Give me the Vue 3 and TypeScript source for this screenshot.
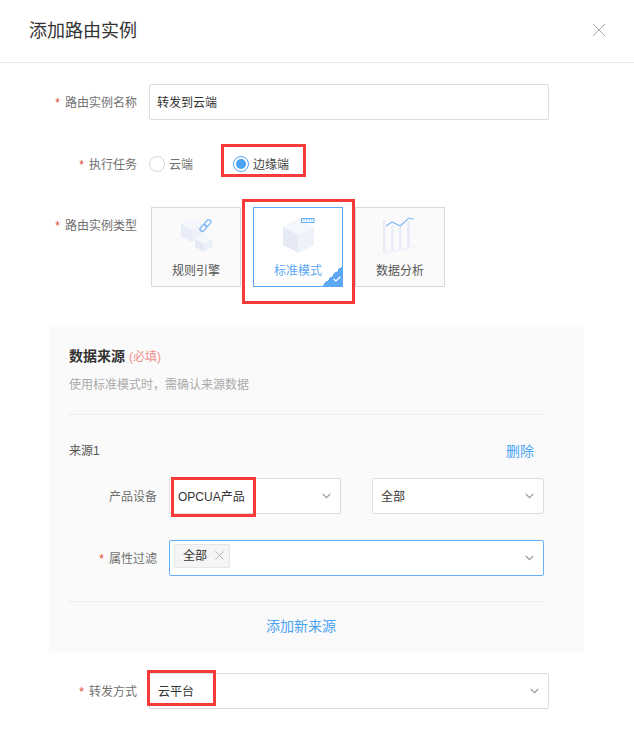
<script setup lang="ts">
type Card = { key: string; label: string; active?: boolean }
const cards: Card[] = [
  { key: 'rule', label: '规则引擎' },
  { key: 'std', label: '标准模式', active: true },
  { key: 'data', label: '数据分析' },
]
</script>

<template>
  <div class="dialog">
    <header class="head">
      <h1 class="title">添加路由实例</h1>
      <svg class="close" width="14" height="14" viewBox="0 0 14 14"><path d="M1 1l12 12M13 1L1 13" stroke="#a8a8a8" stroke-width="1" fill="none" /></svg>
    </header>

    <div class="form">
      <div class="row r1">
        <label class="label"><i>*</i>路由实例名称</label>
        <div class="field"><span class="val">转发到云端</span></div>
      </div>

      <div class="row r2">
        <label class="label"><i>*</i>执行任务</label>
        <div class="radios">
          <span class="radio"><span class="dot"></span><span class="val">云端</span></span>
          <span class="radio on"><span class="dot"></span><span class="val">边缘端</span></span>
        </div>
      </div>

      <div class="row r3">
        <label class="label top"><i>*</i>路由实例类型</label>
        <div class="cards">
          <div v-for="c in cards" :key="c.key" class="card" :class="{ active: c.active }">
            <svg v-if="c.key === 'rule'" class="art" width="50" height="42" viewBox="0 0 50 42">
              <path d="M10 10l11-6 11 6-11 6z" fill="#f4f7fc" />
              <path d="M10 10v12l11 6V16z" fill="#e7ecf7" />
              <path d="M32 10v12l-11 6V16z" fill="#eef2fa" />
              <path d="M24 25l9-5 8.500 5-8.500 5z" fill="#f4f7fc" />
              <path d="M24 25v8l9 5v-8z" fill="#e4e9f5" />
              <path d="M41.500 25v8L33 38v-8z" fill="#ecf0f9" />
              <g fill="none" stroke="#7db8f6" stroke-width="1.3">
                <rect x="-2.200" y="-7" width="4.400" height="7.500" rx="2.200" transform="translate(34.500 11.500) rotate(42)" />
                <rect x="-2.200" y="-0.500" width="4.400" height="7.500" rx="2.200" transform="translate(34.500 11.500) rotate(42)" />
              </g>
            </svg>
            <svg v-else-if="c.key === 'std'" class="art" width="50" height="42" viewBox="0 0 50 42">
              <path d="M10 13l15.500-9L41 13l-15.500 8z" fill="#f4f7fc" />
              <path d="M10 13v18l15.500 8V21z" fill="#e5eaf5" />
              <path d="M41 13v18l-15.500 8V21z" fill="#eef2fa" />
              <rect x="28.500" y="4.500" width="12.500" height="4" fill="#eaf4fe" stroke="#6fb1f5" />
              <path d="M31 5v1.500M33.500 5v1.500M36 5v1.500M38.500 5v1.500" stroke="#6fb1f5" stroke-width="0.8" />
            </svg>
            <svg v-else class="art" width="50" height="42" viewBox="0 0 50 42">
              <g fill="#e7ecf6">
                <rect x="8" y="6" width="2.500" height="32" />
                <rect x="16.300" y="11" width="2.400" height="25" />
                <rect x="24" y="13" width="2.400" height="22" />
                <rect x="32" y="8" width="3" height="26" />
              </g>
              <path d="M8 37.500L42 32.500v1L8 39.500z" fill="#edf1f9" />
              <path d="M11 12l6-4 8.300 4 8.400-8 5.300 1.300" fill="none" stroke="#7db8f6" stroke-width="1.1" />
            </svg>
            <span class="card-text">{{ c.label }}</span>
            <span v-if="c.active" class="corner">
              <svg width="8" height="6" viewBox="0 0 8 6"><path d="M.6 3l2.400 2L7.400.8" fill="none" stroke="#fff" stroke-width="1.300" /></svg>
            </span>
          </div>
        </div>
      </div>

      <section class="panel">
        <div class="panel-title">数据来源 <span class="req">(必填)</span></div>
        <p class="panel-desc">使用标准模式时，需确认来源数据</p>
        <div class="rule first"></div>
        <div class="source-head"><span>来源1</span><a class="link del">删除</a></div>
        <div class="prow p1">
          <label class="plabel">产品设备</label>
          <div class="selects">
            <div class="field select"><span class="val">OPCUA产品</span><svg class="chev" width="9" height="6" viewBox="0 0 9 6"><path d="M.8 1l3.700 3.600L8.200 1" /></svg></div>
            <div class="field select"><span class="val">全部</span><svg class="chev" width="9" height="6" viewBox="0 0 9 6"><path d="M.8 1l3.700 3.600L8.200 1" /></svg></div>
          </div>
        </div>
        <div class="prow p2">
          <label class="plabel"><i>*</i>属性过滤</label>
          <div class="field select focus">
            <span class="tag">全部<svg width="9" height="9" viewBox="0 0 9 9"><path d="M.5.5l8 8M8.500.5l-8 8" stroke="#b4b4b4" fill="none" /></svg></span>
            <svg class="chev" width="9" height="6" viewBox="0 0 9 6"><path d="M.8 1l3.700 3.600L8.200 1" /></svg>
          </div>
        </div>
        <div class="rule second"></div>
        <a class="link add">添加新来源</a>
      </section>

      <div class="row r4">
        <label class="label"><i>*</i>转发方式</label>
        <div class="field select"><span class="val">云平台</span><svg class="chev" width="9" height="6" viewBox="0 0 9 6"><path d="M.8 1l3.700 3.600L8.200 1" /></svg></div>
      </div>
    </div>

    <span class="mark m1"></span>
    <span class="mark m2"></span>
    <span class="mark m3"></span>
    <span class="mark m4"></span>
  </div>
</template>

<style>
html, body { margin: 0; background: #fff; }
</style>

<style scoped>
.dialog {
  position: relative;
  width: 634px;
  height: 732px;
  overflow: hidden;
  background: #fff;
  color: #333;
  font: 12px/20px "Liberation Sans", "Noto Sans CJK SC", sans-serif;
}
.head {
  height: 62px;
  border-bottom: 1px solid #ebebeb;
  display: flex;
  align-items: center;
  justify-content: space-between;
  padding: 0 29px;
}
.title { margin: 0; font-size: 18px; font-weight: 400; line-height: 60px; color: #333; }
.close { margin: -2px -1px 0 0; }
.form { padding-top: 21px; }
.row { display: flex; align-items: center; gap: 12px; padding-right: 85px; }
.label {
  width: 137px;
  flex: none;
  box-sizing: border-box;
  padding-top: 2px;
  text-align: right;
  color: #707070;
}
.label.top { align-self: flex-start; padding-top: 9px; }
i { font-style: normal; color: #e8432d; margin-right: 5px; }
.val { padding-top: 2px; }
.field {
  flex: 1;
  height: 36px;
  box-sizing: border-box;
  border: 1px solid #dcdde0;
  border-radius: 2px;
  background: #fff;
  padding: 0 7px;
  display: flex;
  align-items: center;
  color: #333;
}
.select { position: relative; padding: 0 8px; }
.chev {
  position: absolute;
  right: 9px;
  top: 14px;
  fill: none;
  stroke: #9a9aa8;
  stroke-width: 1.2;
}
.focus { border-color: #66b1f5; padding-left: 4px; align-items: flex-start; padding-top: 3px; }
.r1 { margin-bottom: 26px; }
.r2 { height: 36px; margin-bottom: 25px; }
.r3 { margin-bottom: 38px; align-items: flex-start; }
.radios { display: flex; gap: 40px; }
.radio { display: inline-flex; align-items: center; gap: 4px; color: #707070; }
.dot {
  width: 16px;
  height: 16px;
  box-sizing: border-box;
  border: 1px solid #d9d9d9;
  border-radius: 50%;
  background: #fff;
}
.radio.on { color: #444; }
.radio.on .dot { border-color: #4aa3f5; padding: 2px; }
.radio.on .dot::before {
  content: "";
  display: block;
  width: 10px;
  height: 10px;
  border-radius: 50%;
  background: #4aa3f5;
}
.cards { display: flex; gap: 12px; margin-left: 2px; }
.card {
  position: relative;
  width: 90px;
  height: 80px;
  box-sizing: border-box;
  border: 1px solid #d9d9d9;
  background: #fafafa;
  display: flex;
  flex-direction: column;
  align-items: center;
  padding-top: 6px;
  color: #555;
}
.card.active { border-color: #5ca8f5; background: #fff; color: #5ca8f5; }
.art { display: block; }
.card-text { margin-top: 5px; }
.corner {
  position: absolute;
  right: 0;
  bottom: 0;
  width: 20px;
  height: 20px;
  background: linear-gradient(135deg, transparent 50%, #5ca8f5 50%);
}
.corner svg { position: absolute; right: 1px; bottom: 4px; }
.panel {
  margin-left: 49px;
  width: 535px;
  box-sizing: border-box;
  padding: 20px 40px 16px 19px;
  background: #fafafa;
}
.panel-title { font-size: 14px; font-weight: 700; line-height: 22px; color: #333; padding-left: 1px; }
.req { font-size: 12px; font-weight: 400; color: #f0908c; }
.panel-desc { margin: 7px 0 0; padding-left: 1px; color: #aaa; line-height: 20px; }
.rule { height: 1px; background: #eeeeee; }
.rule.first { margin-top: 19px; }
.source-head {
  display: flex;
  justify-content: space-between;
  margin-top: 26px;
  padding: 0 10px 0 1px;
  color: #555;
}
.link { color: #4aa3f5; }
.prow { display: flex; align-items: center; gap: 12px; }
.p1 { margin-top: 17px; }
.p2 { margin-top: 26px; }
.plabel { width: 89px; flex: none; box-sizing: border-box; padding-top: 2px; text-align: right; color: #707070; }
.selects { flex: 1; display: flex; gap: 31px; }
.tag {
  display: inline-flex;
  align-items: center;
  gap: 8px;
  height: 24px;
  box-sizing: border-box;
  padding: 0 5px 0 8px;
  background: #f5f5f5;
  border: 1px solid #e6e6e6;
  border-radius: 2px;
}
.tag svg { margin-top: -2px; }
.rule.second { margin-top: 25px; }
.add { display: block; margin-top: 14px; padding-right: 10px; text-align: center; font-size: 14px; }
.r4 { margin-top: 21px; }
.del { font-size: 14px; }
.mark {
  position: absolute;
  box-sizing: border-box;
  border: 3px solid #f73a3a;
  pointer-events: none;
}
.m1 { left: 221px; top: 144px; width: 85px; height: 33px; }
.m2 { left: 242px; top: 199px; width: 113px; height: 105px; }
.m3 { left: 171px; top: 477px; width: 85px; height: 40px; }
.m4 { left: 147px; top: 670px; width: 69px; height: 36px; }
</style>
